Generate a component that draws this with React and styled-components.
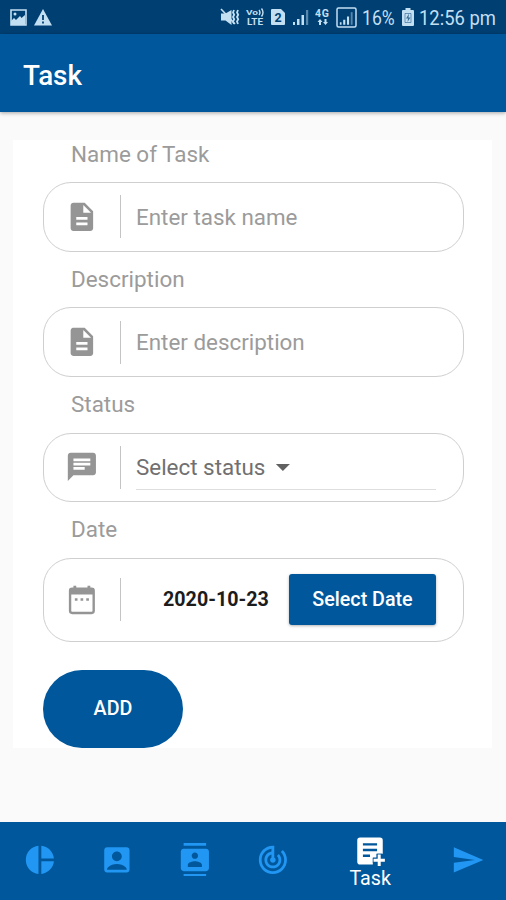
import React from 'react';
import styled, { createGlobalStyle } from 'styled-components';
import {
  MdAccountBox,
  MdArrowDropDown,
  MdChat,
  MdContacts,
  MdDescription,
  MdPieChart,
  MdSend,
  MdTrackChanges,
} from 'react-icons/md';

const GlobalStyle = createGlobalStyle`
  :root {
    --primary-color: #01579b;
    --status-color: #003f72;
    --accent-color: #2196f3;
    --hint-color: #9b9b9b;
  }

  * {
    box-sizing: border-box;
  }

  body {
    margin: 0;
    background: #fafafa;
    font-family: Roboto, sans-serif;
  }
`;

const Screen = styled.div`
  display: flex;
  flex-direction: column;
  width: 506px;
  height: 900px;
  overflow: hidden;
  background: #fafafa;
`;

const StatusBar = styled.div`
  display: flex;
  flex: none;
  align-items: center;
  justify-content: space-between;
  height: 34px;
  padding: 0 10px 0 10px;
  background: var(--status-color);
  color: #c3dff2;

  svg {
    display: block;
    flex: none;
  }
`;

const StatusGroup = styled.div`
  display: flex;
  align-items: center;
  gap: ${({ $gap }) => $gap}px;
`;

const StatusText = styled.span`
  width: ${({ $width }) => $width}px;
  padding-top: 1px;
  font-size: 20px;
  line-height: 34px;
  white-space: nowrap;

  span {
    display: inline-block;
    transform: scaleX(${({ $squeeze }) => $squeeze});
    transform-origin: left;
  }
`;

const AppBar = styled.header`
  display: flex;
  flex: none;
  align-items: center;
  height: 78px;
  padding: 4px 23px 0;
  background: var(--primary-color);
  box-shadow: 0 1px 4px rgba(0, 0, 0, 0.35);
`;

const AppTitle = styled.h1`
  margin: 0;
  color: white;
  font-size: 27.8px;
  font-weight: 500;
`;

const Content = styled.main`
  flex: 1;
  padding: 28px 14px 0 13px;
`;

const FormCard = styled.form`
  height: 608px;
  padding: 0 28px 0 30px;
  background: white;
`;

const FieldLabel = styled.label`
  display: block;
  height: ${({ $first }) => ($first ? 42 : 55.8)}px;
  padding: ${({ $first }) => ($first ? 0 : 13.2)}px 0 0 28px;
  color: var(--hint-color);
  font-size: 22.45px;
  line-height: 29px;
`;

const FieldBox = styled.div`
  display: flex;
  align-items: center;
  height: ${({ $tall }) => ($tall ? 84 : 69.5)}px;
  padding: 0 27px 0 21px;
  border: 1px solid #cfcfcf;
  border-radius: 28px;
`;

const FieldIcon = styled.span`
  display: flex;
  width: 55px;
  color: #959595;
  font-size: 33.75px;
`;

const FieldDivider = styled.span`
  width: 1px;
  height: 43px;
  margin-right: 15px;
  background: #c4c4c4;
`;

const TextInput = styled.input`
  flex: 1;
  min-width: 0;
  padding: 0;
  border: 0;
  outline: 0;
  background: transparent;
  font-family: inherit;
  font-size: 22.4px;

  &::placeholder {
    color: var(--hint-color);
  }
`;

const StatusSelect = styled.div`
  display: flex;
  flex: 1;
  align-items: center;
  height: 45px;
  border-bottom: 1px solid #dedede;
  color: #707070;
  font-size: 22.4px;

  svg {
    margin-left: 1px;
    color: #616161;
    font-size: 33.75px;
  }
`;

const DateValue = styled.span`
  flex: 1;
  padding-left: 27px;
  color: #1c1c1c;
  font-size: 19.7px;
  font-weight: 700;
  white-space: nowrap;
`;

const DateButton = styled.button`
  width: 147px;
  height: 51px;
  padding: 0;
  border: 0;
  border-radius: 3px;
  background: var(--primary-color);
  box-shadow: 0 1px 3px rgba(0, 0, 0, 0.3);
  color: white;
  font-family: inherit;
  font-size: 19.7px;
  font-weight: 500;
`;

const AddButton = styled.button`
  display: block;
  width: 140px;
  height: 78px;
  margin-top: 28.1px;
  padding: 0;
  border: 0;
  border-radius: 39px;
  background: var(--primary-color);
  color: white;
  font-family: inherit;
  font-size: 19.7px;
  font-weight: 500;
`;

const BottomNav = styled.nav`
  display: flex;
  flex: none;
  height: 78px;
  padding-left: 0.5px;
  background: var(--primary-color);
`;

const NavItem = styled.a`
  display: flex;
  flex: none;
  flex-direction: column;
  align-items: center;
  justify-content: ${({ $active }) => ($active ? 'flex-start' : 'center')};
  width: ${({ $active }) => ($active ? 117 : 77.8)}px;
  padding: ${({ $active }) => ($active ? '12px 0 0' : '0 0 3px')};
  color: ${({ $active }) => ($active ? 'white' : 'var(--accent-color)')};
  font-size: 33.75px;
`;

const NavLabel = styled.span`
  margin-top: -2px;
  font-size: 19.7px;
  line-height: 26px;
`;

const PictureIcon = () => (
  <svg width="17" height="17" viewBox="0 0 17 17">
    <path d="M1 1h15v15H1z" fill="none" stroke="currentColor" strokeWidth="1.6" />
    <path d="M1 12l3-3 2 2 4-4 1.5 2L15 6v10H1z" fill="currentColor" />
    <circle cx="5" cy="5" r="1.5" fill="currentColor" />
  </svg>
);

const WarningIcon = () => (
  <svg width="18" height="17" viewBox="0 0 18 17">
    <path d="M9 0l9 16.500H0z" fill="currentColor" />
    <path d="M9 6v5M9 12.5v2" stroke="#003f72" strokeWidth="1.8" />
  </svg>
);

const MuteIcon = () => (
  <svg width="20" height="20" viewBox="0 0 20 20">
    <path d="M1 6.500h4.500L11.500 3v15l-6-4.500H1z" fill="currentColor" />
    <path
      d="M14 3l-1 2.500 1.200 2.300L13 10l1.200 2.300L13 14.500l1 2.500M18 3l-1 2.500 1.200 2.300L17 10l1.200 2.300-1.200 2.200 1 2.500"
      fill="none"
      stroke="currentColor"
      strokeWidth="1.800"
    />
    <path d="M1 2l14 15" stroke="currentColor" strokeWidth="1.600" />
  </svg>
);

const VolteIcon = () => (
  <svg width="19" height="20" viewBox="0 0 19 20" fill="currentColor" fontFamily="Roboto" fontWeight="700">
    <text x="0" y="8.200" fontSize="8" textLength="12" lengthAdjust="spacingAndGlyphs">Vo</text>
    <path d="M13 3q2 2.500 0 5M15.500 1.500q3 4 0 8" fill="none" stroke="currentColor" strokeWidth="1.400" />
    <text x="1" y="18.300" fontSize="8.500" textLength="16" lengthAdjust="spacingAndGlyphs">LTE</text>
  </svg>
);

const SimIcon = () => (
  <svg width="16" height="18" viewBox="0 0 16 18">
    <path d="M2 1h9l4 4v11a1 1 0 0 1-1 1H2a1 1 0 0 1-1-1V2a1 1 0 0 1 1-1z" fill="currentColor" />
    <text x="8" y="13.500" fontSize="12.500" fontWeight="700" fontFamily="Roboto" textAnchor="middle" fill="#003f72">2</text>
  </svg>
);

const Bars = () => (
  <>
    <path d="M1 14h2v3H1zM5 11h2.500v6H5zM9.500 7H12v10H9.500z" fill="currentColor" />
    <path d="M14 2h2.200v15H14z" fill="currentColor" opacity="0.45" />
  </>
);

const SignalIcon = () => (
  <svg width="18" height="18" viewBox="0 0 18 18">
    <Bars />
  </svg>
);

const BoxedSignalIcon = () => (
  <svg width="21" height="21" viewBox="0 0 21 21">
    <rect x="1" y="1" width="19" height="19" rx="1.500" fill="none" stroke="currentColor" strokeWidth="1.500" />
    <g transform="translate(3 3.500) scale(.84)">
      <Bars />
    </g>
  </svg>
);

const FourGIcon = () => (
  <svg width="15" height="20" viewBox="0 0 15 20" fill="currentColor">
    <text x="0" y="9.500" fontSize="10.500" fontWeight="700" fontFamily="Roboto" textLength="14">4G</text>
    <path d="M2.500 15L5 12l2.500 3H6v3H4v-3zM8 15h1.500v-3h2v3H13l-2.500 3z" />
  </svg>
);

const BatteryIcon = () => (
  <svg width="12" height="18" viewBox="0 0 12 18">
    <path d="M3.500 0h5v2H11a1 1 0 0 1 1 1v14a1 1 0 0 1-1 1H1a1 1 0 0 1-1-1V3a1 1 0 0 1 1-1h2.500z" fill="currentColor" />
    <path d="M3 5.500h6v9H3z" fill="none" stroke="#003f72" strokeWidth="0.800" opacity="0.600" />
    <path d="M7 5.500L4 10.500h2L5.500 14l3-4.500h-2z" fill="#003f72" opacity="0.700" />
  </svg>
);

const CalendarIcon = () => (
  <svg width="1em" height="1em" viewBox="0 0 24 24" fill="currentColor">
    <rect x="3.600" y="4" width="16.800" height="17.300" rx="1.500" fill="none" stroke="currentColor" strokeWidth="1.700" />
    <path d="M3.500 3.500h17v4.700h-17zM6 2h2v3H6zM16 2h2v3h-2z" />
    <path d="M7 10.800h1.900v1.900H7zM11.050 10.800h1.900v1.900h-1.900zM15.100 10.800H17v1.900h-1.900z" />
  </svg>
);

const TaskAddIcon = () => (
  <svg width="34" height="34" viewBox="0 0 24 24">
    <path
      d="M5 2.500h14a2 2 0 0 1 2 2v9.500h-4v3h-3v4.500H5a2 2 0 0 1-2-2v-15a2 2 0 0 1 2-2z"
      fill="currentColor"
    />
    <path d="M7 7.300h10M7 11.300h10M7 15.300h5" stroke="var(--primary-color)" strokeWidth="1.700" />
    <path d="M18.500 14v8.500M14 18.500h8.500" stroke="var(--primary-color)" strokeWidth="4" />
    <path d="M18.500 14.500v8M14.500 18.500h8" stroke="currentColor" strokeWidth="2.100" />
  </svg>
);

const navItems = [
  { name: 'chart', icon: <MdPieChart /> },
  { name: 'account', icon: <MdAccountBox /> },
  { name: 'contacts', icon: <MdContacts /> },
  { name: 'track', icon: <MdTrackChanges /> },
  { name: 'task', icon: <TaskAddIcon />, label: 'Task' },
  { name: 'send', icon: <MdSend /> },
];

const Field = ({ label, icon, first, tall, children }) => (
  <>
    <FieldLabel $first={first}>{label}</FieldLabel>
    <FieldBox $tall={tall}>
      <FieldIcon>{icon}</FieldIcon>
      <FieldDivider />
      {children}
    </FieldBox>
  </>
);

const App = () => {
  return (
    <Screen>
      <GlobalStyle />
      <StatusBar>
        <StatusGroup $gap={7}>
          <PictureIcon />
          <WarningIcon />
        </StatusGroup>
        <StatusGroup $gap={5.5}>
          <MuteIcon />
          <VolteIcon />
          <SimIcon />
          <SignalIcon />
          <FourGIcon />
          <BoxedSignalIcon />
          <StatusText $width={34} $squeeze={0.88}><span>16%</span></StatusText>
          <BatteryIcon />
          <StatusText $width={77} $squeeze={0.92}><span>12:56 pm</span></StatusText>
        </StatusGroup>
      </StatusBar>

      <AppBar>
        <AppTitle>Task</AppTitle>
      </AppBar>

      <Content>
        <FormCard>
          <Field label="Name of Task" icon={<MdDescription />} first>
            <TextInput placeholder="Enter task name" />
          </Field>
          <Field label="Description" icon={<MdDescription />}>
            <TextInput placeholder="Enter description" />
          </Field>
          <Field label="Status" icon={<MdChat />}>
            <StatusSelect>
              Select status
              <MdArrowDropDown />
            </StatusSelect>
          </Field>
          <Field label="Date" icon={<CalendarIcon />} tall>
            <DateValue>2020-10-23</DateValue>
            <DateButton type="button">Select Date</DateButton>
          </Field>
          <AddButton type="button">ADD</AddButton>
        </FormCard>
      </Content>

      <BottomNav>
        {navItems.map((item) => (
          <NavItem key={item.name} $active={Boolean(item.label)}>
            {item.icon}
            {item.label && <NavLabel>{item.label}</NavLabel>}
          </NavItem>
        ))}
      </BottomNav>
    </Screen>
  );
};

export default App;
